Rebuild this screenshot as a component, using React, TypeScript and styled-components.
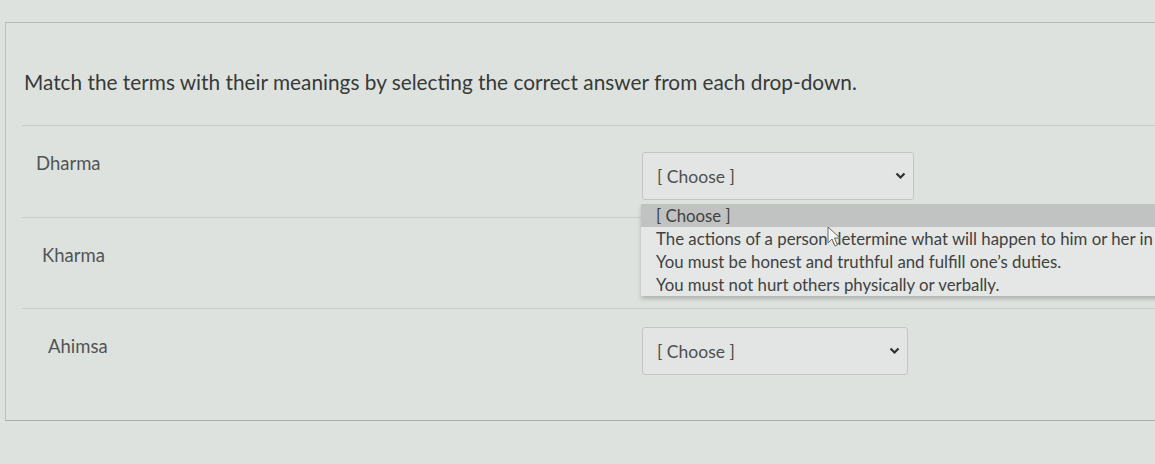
import styled, { createGlobalStyle } from 'styled-components'

const Global = createGlobalStyle`
  html, body {
    margin: 0;
    overflow: hidden;
    background: #dee2df;
    font-family: Lato, "Open Sans", sans-serif;
    color: #3b3e3d;
  }
`

const Page = styled.div`
  padding-top: 22px;
  height: 464px;
  box-sizing: border-box;
  overflow: hidden;
`

const Card = styled.div`
  margin-left: 5px;
  border-top: 1px solid #b6bab8;
  border-left: 1px solid #bcc0be;
  border-bottom: 1px solid #a9adab;
  box-sizing: border-box;
  height: 399px;
`

const Question = styled.p`
  margin: 0;
  padding: 46px 0 0 18px;
  font-size: 20.8px;
  line-height: 26px;
  color: #373a39;
`

const Divider = styled.hr<{ $top: number }>`
  margin: ${p => p.$top}px 0 0 16px;
  border: 0;
  border-top: 1px solid #c8ccca;
  height: 0;
`

const Row = styled.div<{ $height: number }>`
  display: grid;
  grid-template-columns: 636px 1fr;
  height: ${p => p.$height}px;
`

const Term = styled.div<{ $indent: number }>`
  padding: 26px 0 0 ${p => p.$indent}px;
  font-size: 18.5px;
  line-height: 22px;
  color: #525554;
`

const Field = styled.div<{ $top: number }>`
  position: relative;
  padding-top: ${p => p.$top}px;
`

const Select = styled.div<{ $width: number }>`
  width: ${p => p.$width}px;
  height: 48px;
  box-sizing: border-box;
  border: 1px solid #c2c6c4;
  border-radius: 3px;
  background: #e2e5e3;
  display: flex;
  align-items: center;
  justify-content: space-between;
  padding: 0 7px 0 14px;
  font-size: 17.5px;
  color: #4d504f;
`

const Chevron = styled.svg`
  width: 11px;
  height: 8px;
`

const Menu = styled.ul`
  position: absolute;
  top: 78px;
  left: -1px;
  width: 520px;
  margin: 0;
  padding: 0;
  list-style: none;
  overflow: hidden;
  background: #e4e7e5;
  box-shadow: 0 3px 4px rgba(0, 0, 0, 0.2);
  z-index: 2;
`

const Option = styled.li<{ $active?: boolean }>`
  height: 23px;
  line-height: 23px;
  padding-left: 15px;
  font-size: 16.8px;
  white-space: nowrap;
  color: #3f4241;
  background: ${p => (p.$active ? '#c0c3c1' : 'transparent')};
`

const Cursor = styled.svg`
  position: absolute;
  left: 185px;
  top: 100px;
  width: 14px;
  height: 22px;
  z-index: 3;
`

const options = [
  'The actions of a person determine what will happen to him or her in this life or the next.',
  'You must be honest and truthful and fulfill one’s duties.',
  'You must not hurt others physically or verbally.',
]

const ChoiceBox = ({ width }: { width: number }) => (
  <Select $width={width}>
    <span>[ Choose ]</span>
    <Chevron viewBox="0 0 11 8">
      <path d="M1.5 1.5 L5.5 5.5 L9.5 1.5" fill="none" stroke="#2e3130" strokeWidth="2.2" />
    </Chevron>
  </Select>
)

const App = () => {
  return (
    <Page>
      <Global />
      <Card>
        <Question>
          Match the terms with their meanings by selecting the correct answer from each drop-down.
        </Question>
        <Divider $top={30} />
        <Row $height={91}>
          <Term $indent={30}>Dharma</Term>
          <Field $top={26}>
            <ChoiceBox width={272} />
            <Menu>
              <Option $active>[ Choose ]</Option>
              {options.map(o => (
                <Option key={o}>{o}</Option>
              ))}
            </Menu>
            <Cursor viewBox="0 0 14 22">
              <path
                d="M1 1 L1 17 L5 13 L8 20 L10.5 19 L7.5 12 L13 12 Z"
                fill="#f4f5f4"
                stroke="#6a6d6c"
                strokeWidth="1"
                strokeLinejoin="round"
              />
            </Cursor>
          </Field>
        </Row>
        <Divider $top={0} />
        <Row $height={90}>
          <Term $indent={36}>Kharma</Term>
          <Field $top={26}>
            <ChoiceBox width={272} />
          </Field>
        </Row>
        <Divider $top={0} />
        <Row $height={110}>
          <Term $indent={42}>Ahimsa</Term>
          <Field $top={18}>
            <ChoiceBox width={266} />
          </Field>
        </Row>
      </Card>
    </Page>
  )
}

export default App
